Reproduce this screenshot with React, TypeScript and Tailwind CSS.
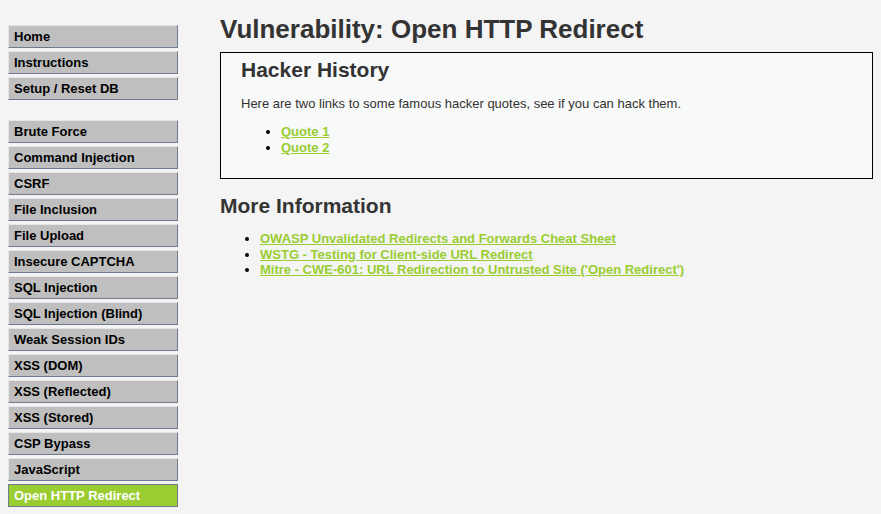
const menuTop = ['Home', 'Instructions', 'Setup / Reset DB'];
const menuVulns = [
  'Brute Force',
  'Command Injection',
  'CSRF',
  'File Inclusion',
  'File Upload',
  'Insecure CAPTCHA',
  'SQL Injection',
  'SQL Injection (Blind)',
  'Weak Session IDs',
  'XSS (DOM)',
  'XSS (Reflected)',
  'XSS (Stored)',
  'CSP Bypass',
  'JavaScript',
  'Open HTTP Redirect',
];

const moreInfo = [
  'OWASP Unvalidated Redirects and Forwards Cheat Sheet',
  'WSTG - Testing for Client-side URL Redirect',
  "Mitre - CWE-601: URL Redirection to Untrusted Site ('Open Redirect')",
];

function MenuItem({ label, selected }: { label: string; selected?: boolean }) {
  return (
    <li className="mb-[3px]">
      <a
        href="#"
        className={
          selected
            ? 'block h-[23px] border border-[#6d7b8d] bg-[#9acd32] px-[5px] pt-[3px] text-[13px] leading-[15px] font-bold text-white'
            : 'block h-[23px] border border-t-[#e6e6e6] border-l-[#e6e6e6] border-r-[#6d7b8d] border-b-[#6d7b8d] bg-[#bfbfbf] px-[5px] pt-[3px] text-[13px] leading-[15px] font-bold text-black'
        }
      >
        {label}
      </a>
    </li>
  );
}

export default function App() {
  return (
    <div className="flex min-h-screen w-full bg-[#f4f4f4] font-['Liberation_Sans',Arial,sans-serif] text-[#333]">
      {/* Main menu */}
      <div className="w-[170px] shrink-0 ml-[8px] pt-[25px]">
        <ul className="mb-[20px]">
          {menuTop.map((m) => (
            <MenuItem key={m} label={m} />
          ))}
        </ul>
        <ul>
          {menuVulns.map((m) => (
            <MenuItem key={m} label={m} selected={m === 'Open HTTP Redirect'} />
          ))}
        </ul>
      </div>

      {/* Body */}
      <div className="ml-[42px] mr-[8px] flex-1 pt-[14px]">
        <h1 className="text-[26px] leading-[30px] font-bold">Vulnerability: Open HTTP Redirect</h1>

        <div className="mt-[8px] border border-black bg-[#f8f9f9] pl-[20px] pr-[20px] pt-[4px] pb-[22px]">
          <h2 className="text-[21px] leading-[26px] font-bold">Hacker History</h2>
          <p className="mt-[13px] text-[13px] leading-[16px]">
            Here are two links to some famous hacker quotes, see if you can hack them.
          </p>
          <ul className="mt-[12px] ml-[40px] list-disc text-[13px] leading-[16px] marker:text-black">
            <li>
              <a href="#" className="font-bold text-[#9acd32] underline">Quote 1</a>
            </li>
            <li>
              <a href="#" className="font-bold text-[#9acd32] underline">Quote 2</a>
            </li>
          </ul>
        </div>

        <h2 className="mt-[14px] text-[21px] leading-[26px] font-bold">More Information</h2>
        <ul className="mt-[12px] ml-[40px] list-disc text-[13px] leading-[15.5px] marker:text-black">
          {moreInfo.map((m) => (
            <li key={m}>
              <a href="#" className="font-bold text-[#9acd32] underline">{m}</a>
            </li>
          ))}
        </ul>
      </div>
    </div>
  );
}
